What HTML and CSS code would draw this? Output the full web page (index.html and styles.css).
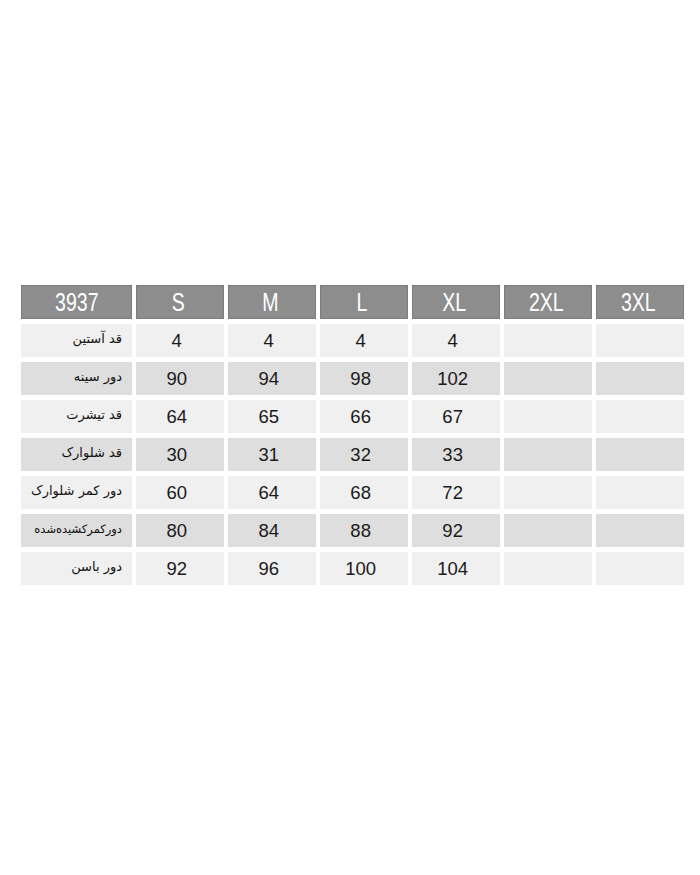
FILE: index.html
```html
<!DOCTYPE html>
<html lang="fa">
<head>
<meta charset="utf-8">
<link rel="stylesheet" href="styles.css">
</head>
<body>
<div class="page">
  <div class="table">
    <div class="cell head first"><span>3937</span></div>
    <div class="cell head"><span>S</span></div>
    <div class="cell head"><span>M</span></div>
    <div class="cell head"><span>L</span></div>
    <div class="cell head"><span>XL</span></div>
    <div class="cell head"><span>2XL</span></div>
    <div class="cell head"><span>3XL</span></div>

    <div class="cell label light" dir="rtl">قد آستین</div>
    <div class="cell light">4</div><div class="cell light">4</div><div class="cell light">4</div><div class="cell light">4</div><div class="cell light"></div><div class="cell light"></div>

    <div class="cell label dark" dir="rtl">دور سینه</div>
    <div class="cell dark">90</div><div class="cell dark">94</div><div class="cell dark">98</div><div class="cell dark">102</div><div class="cell dark"></div><div class="cell dark"></div>

    <div class="cell label light" dir="rtl">قد تیشرت</div>
    <div class="cell light">64</div><div class="cell light">65</div><div class="cell light">66</div><div class="cell light">67</div><div class="cell light"></div><div class="cell light"></div>

    <div class="cell label dark" dir="rtl">قد شلوارک</div>
    <div class="cell dark">30</div><div class="cell dark">31</div><div class="cell dark">32</div><div class="cell dark">33</div><div class="cell dark"></div><div class="cell dark"></div>

    <div class="cell label light" dir="rtl">دور کمر شلوارک</div>
    <div class="cell light">60</div><div class="cell light">64</div><div class="cell light">68</div><div class="cell light">72</div><div class="cell light"></div><div class="cell light"></div>

    <div class="cell label dark small" dir="rtl">دورکمرکشیده‌شده</div>
    <div class="cell dark">80</div><div class="cell dark">84</div><div class="cell dark">88</div><div class="cell dark">92</div><div class="cell dark"></div><div class="cell dark"></div>

    <div class="cell label light" dir="rtl">دور باسن</div>
    <div class="cell light">92</div><div class="cell light">96</div><div class="cell light">100</div><div class="cell light">104</div><div class="cell light"></div><div class="cell light"></div>
  </div>
</div>
</body>
</html>
```
FILE: styles.css
```css
html, body {
  margin: 0;
  padding: 0;
  background: #ffffff;
}
.page {
  width: 700px;
  height: 875px;
  padding: 285px 0 0 21px;
  box-sizing: border-box;
}
.table {
  display: grid;
  grid-template-columns: 111px repeat(6, 87.6px);
  grid-template-rows: 34px repeat(7, 33px);
  column-gap: 4.4px;
  row-gap: 5px;
  width: 663px;
}
.cell {
  display: flex;
  align-items: center;
  justify-content: center;
  padding-right: 7px;
  font-family: "Liberation Sans", Arial, sans-serif;
  font-size: 18.5px;
  color: #1a1a1a;
  box-sizing: border-box;
}
.head {
  background: #8d8d8d;
  border: 1px solid #7c7c7c;
  color: #ffffff;
  font-size: 25px;
  padding-right: 4px;
}
.head.first {
  padding-right: 0;
}
.head span {
  display: inline-block;
  transform: scaleX(0.78);
  line-height: 1;
}
.light {
  background: #f0f0f0;
}
.dark {
  background: #dedede;
}
.label {
  justify-content: flex-start;
  padding-right: 10px;
  font-family: "DejaVu Sans", "Noto Sans", sans-serif;
  font-size: 13px;
  color: #111111;
  padding-bottom: 4px;
}
.label.small {
  font-size: 11.5px;
  letter-spacing: -0.2px;
}
```
